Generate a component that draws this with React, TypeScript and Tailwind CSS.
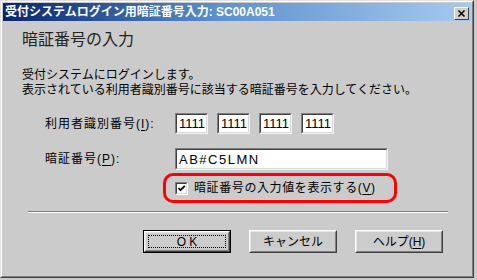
import type { ReactNode } from "react";

const FONT = "font-['Liberation_Sans','Noto_Sans_CJK_JP',sans-serif]";

function Key({ children }: { children: ReactNode }) {
  return <span className="underline underline-offset-2">{children}</span>;
}

function Sunken({ value, className }: { value?: string; className?: string }) {
  // classic 3D inset edit box
  return (
    <div className={`border border-t-[#808080] border-l-[#808080] border-r-[#f4f4f4] border-b-[#f4f4f4] ${className ?? ""}`}>
      <div className="flex h-full items-center border border-t-[#404040] border-l-[#404040] border-r-[#d8d8d8] border-b-[#d8d8d8] bg-white pl-[2px] text-[13px] leading-none text-black">
        {value}
      </div>
    </div>
  );
}

function Button({ children, focused }: { children: ReactNode; focused?: boolean }) {
  const inner = (
    <div className="h-full border border-t-white border-l-white border-r-[#404040] border-b-[#404040]">
      <div className="flex h-full items-center justify-center border border-t-[#e4e4e4] border-l-[#e4e4e4] border-r-[#808080] border-b-[#808080] bg-[#cccccc] p-[2px]">
        <div
          className={`flex h-full w-full items-center justify-center text-[12px] leading-none text-black ${
            focused ? "border border-dotted border-black" : ""
          }`}
        >
          {children}
        </div>
      </div>
    </div>
  );
  return (
    <div className={`h-[23px] w-[88px] ${focused ? "border border-black" : ""}`}>{inner}</div>
  );
}

export default function App() {
  return (
    <div className={`h-[280px] w-[477px] bg-[#cbcbcb] ${FONT}`}>
      <div className="h-[278px] w-[474px] border border-t-[#e2e2e2] border-l-[#e2e2e2] border-r-[#404040] border-b-[#404040]">
        <div className="flex h-full flex-col border border-t-white border-l-white border-r-[#808080] border-b-[#808080] p-px">
          {/* title bar */}
          <div className="flex h-[18px] items-center justify-between bg-linear-to-r from-[#0a246a] via-[#5a90cc] via-45% to-[#a6caf0] pl-[2px] pr-[2px]">
            <span className="text-[12px] font-bold leading-none text-white">
              受付システムログイン用暗証番号入力: SC00A051
            </span>
            <div className="mt-[2px] h-[13px] w-[15px] border border-t-white border-l-white border-r-[#404040] border-b-[#404040] bg-[#d4d0c8]">
              <svg viewBox="0 0 13 11" className="h-full w-full">
                <path d="M3.5 2.5 L9.5 8.5 M9.5 2.5 L3.5 8.5" stroke="#000" strokeWidth="1.6" />
              </svg>
            </div>
          </div>

          {/* body */}
          <div className="flex flex-col text-black">
            <div className="ml-[19px] mt-[9px] text-[16px] leading-[20px] text-[#222]">暗証番号の入力</div>

            <div className="ml-[19px] mt-[18px] text-[12px] leading-[15px]">
              <div>受付システムにログインします。</div>
              <div>表示されている利用者識別番号に該当する暗証番号を入力してください。</div>
            </div>

            <div className="ml-[42px] mt-[15px] flex h-[21px] items-center">
              <div className="w-[130px] text-[12px] tracking-[1px]">
                利用者識別番号(<Key>I</Key>):
              </div>
              <div className="flex h-full gap-[9px]">
                {["1111", "1111", "1111", "1111"].map((v, i) => (
                  <Sunken key={i} value={v} className="h-full w-[33px]" />
                ))}
              </div>
            </div>

            <div className="ml-[42px] mt-[14px] flex h-[22px] items-center">
              <div className="w-[130px] text-[12px] tracking-[1px]">
                暗証番号(<Key>P</Key>):
              </div>
              <Sunken value="AB#C5LMN" className="h-full w-[213px] tracking-[1.5px]" />
            </div>

            {/* highlighted option */}
            <div className="ml-[160px] mt-[3px] flex h-[30px] w-[234px] items-center rounded-[10px] border-[3px] border-[#ff0000] pl-[9px]">
              <div className="h-[13px] w-[13px] border border-t-[#808080] border-l-[#808080] border-r-white border-b-white">
                <div className="h-full w-full border border-t-[#404040] border-l-[#404040] border-r-[#d8d8d8] border-b-[#d8d8d8] bg-white">
                  <svg viewBox="0 0 9 9" className="h-full w-full">
                    <path d="M1.5 4 L3.5 6.2 L7.8 1.8" stroke="#000" strokeWidth="1.7" fill="none" />
                  </svg>
                </div>
              </div>
              <span className="ml-[6px] text-[12px] tracking-[0.6px]">
                暗証番号の入力値を表示する(<Key>V</Key>)
              </span>
            </div>

            {/* separator */}
            <div className="ml-[25px] mt-[8px] w-[420px] border-t border-b border-t-[#808080] border-b-white" />

            <div className="ml-[140px] mt-[17px] flex gap-[18px]">
              <Button focused>O K</Button>
              <Button>キャンセル</Button>
              <Button>
                ヘルプ(<Key>H</Key>)
              </Button>
            </div>
          </div>
        </div>
      </div>
    </div>
  );
}
